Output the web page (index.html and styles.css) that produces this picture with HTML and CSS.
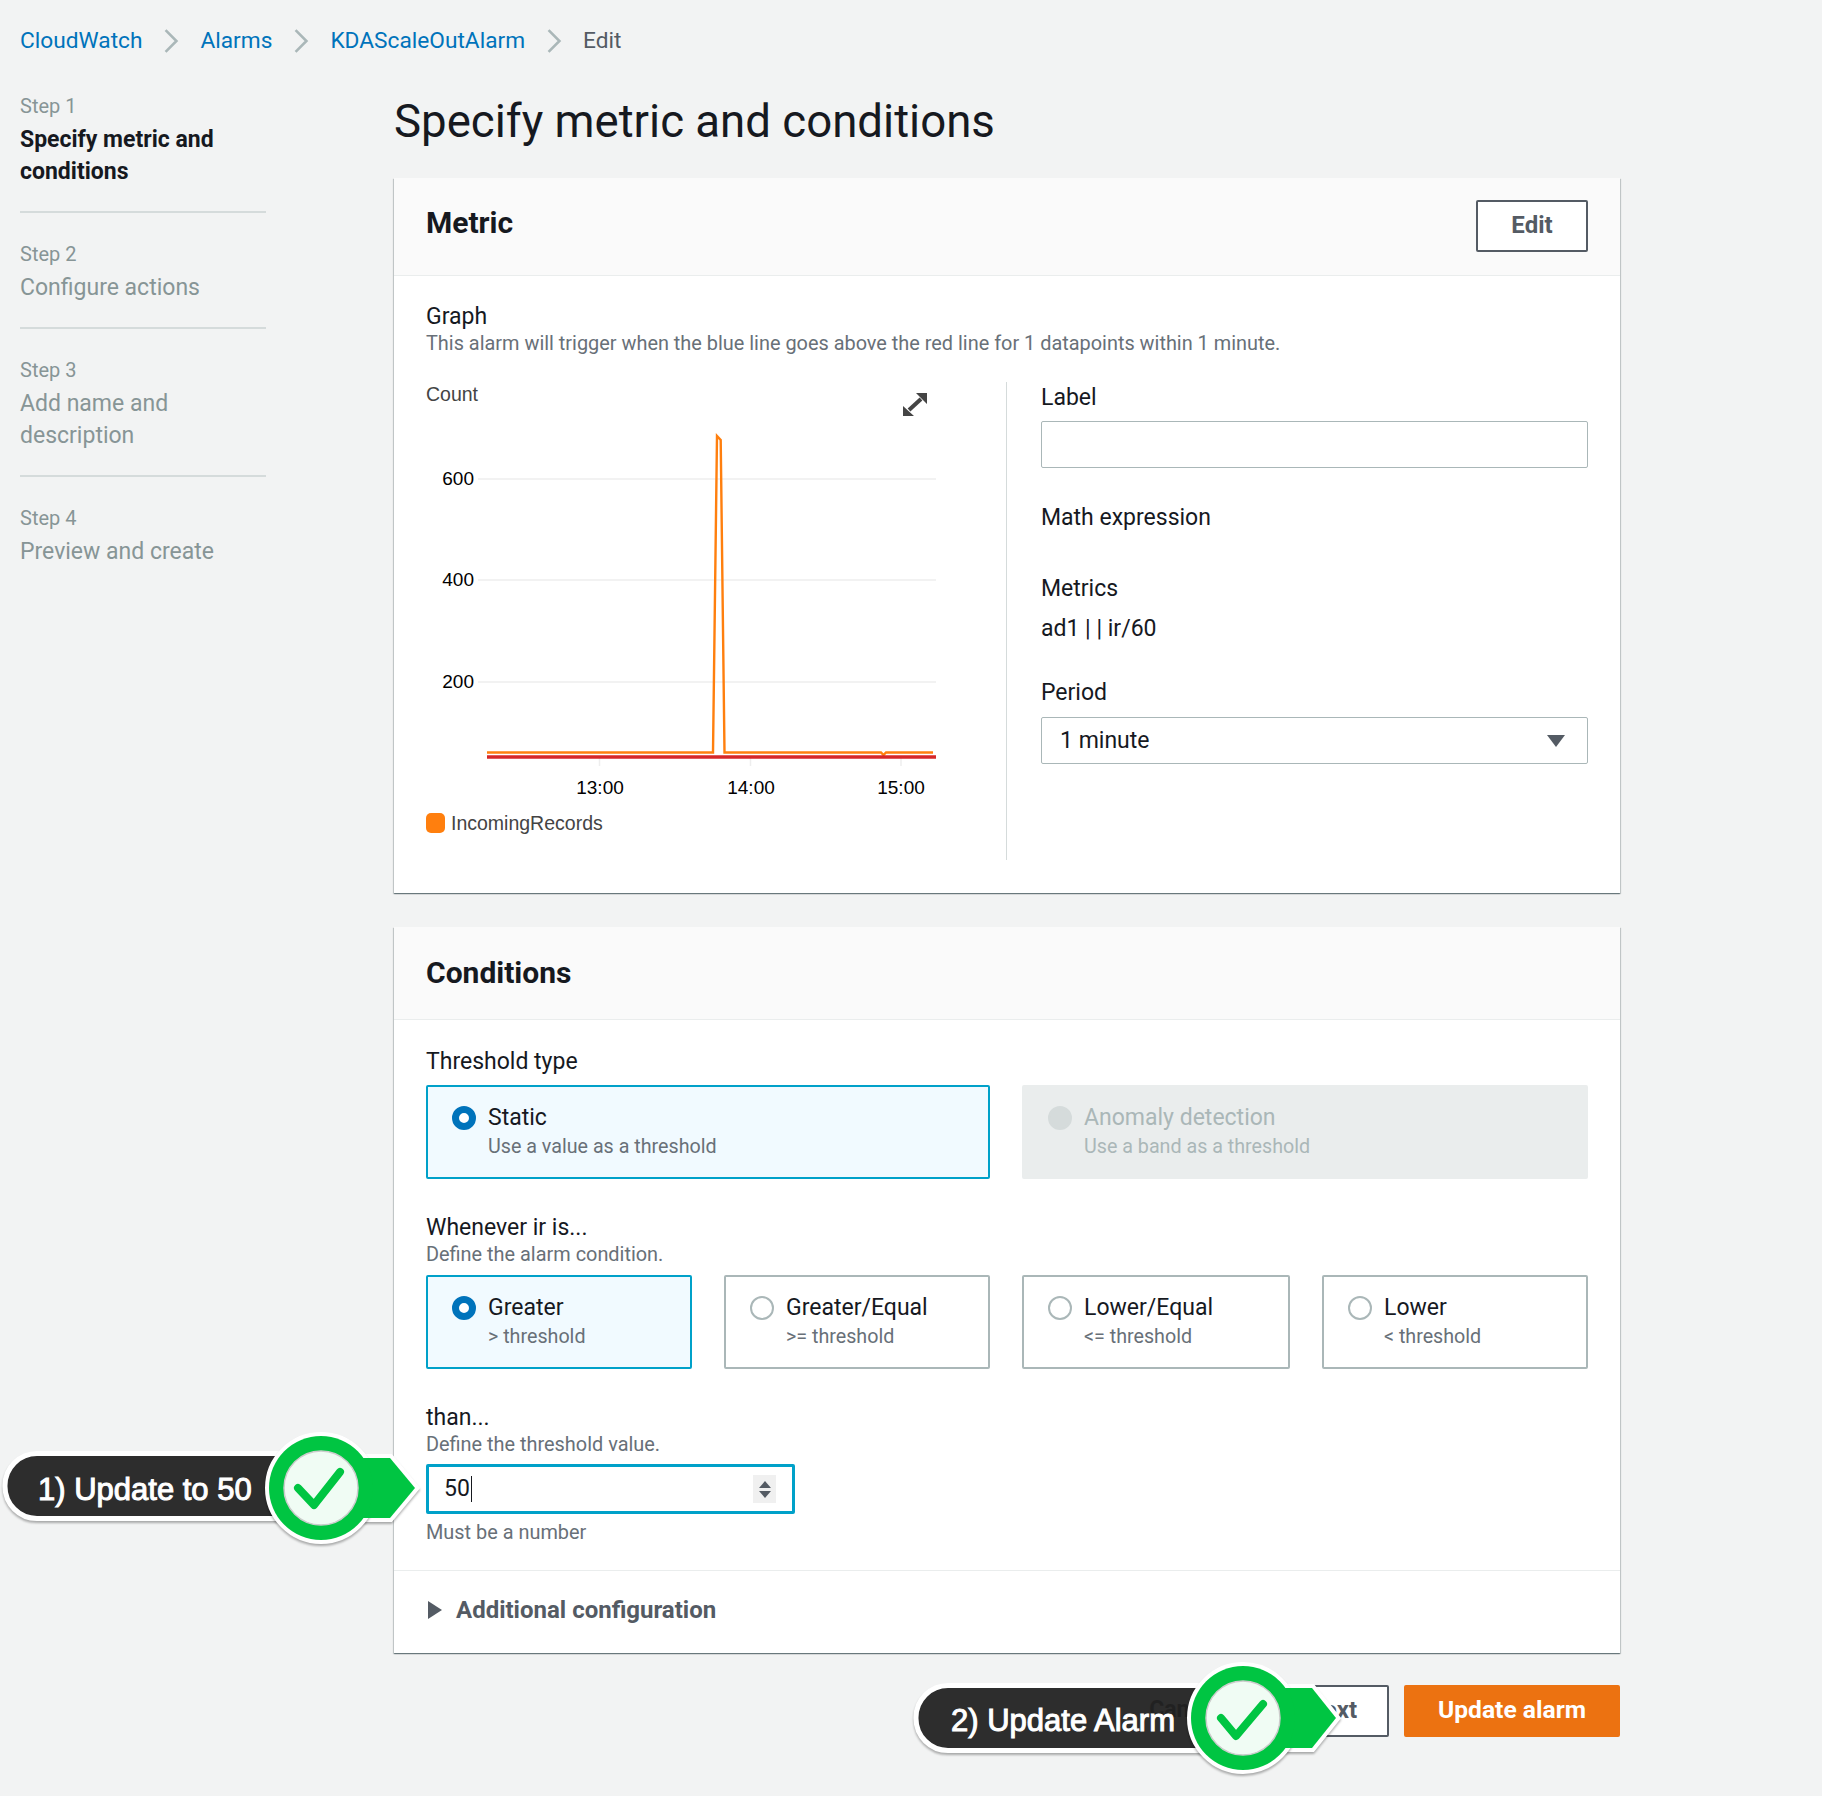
FILE: index.html
```html
<!DOCTYPE html>
<html lang="en">
<head>
    <meta charset="UTF-8">
    <title>Edit alarm</title>
    <link rel="stylesheet" href="styles.css">
</head>
<body>

<nav class="breadcrumb">
    <a href="#">CloudWatch</a>
    <svg class="crumb-sep" viewBox="0 0 14 24"><path d="M2 2l10 10L2 22"/></svg>
    <a href="#">Alarms</a>
    <svg class="crumb-sep" viewBox="0 0 14 24"><path d="M2 2l10 10L2 22"/></svg>
    <a href="#">KDAScaleOutAlarm</a>
    <svg class="crumb-sep" viewBox="0 0 14 24"><path d="M2 2l10 10L2 22"/></svg>
    <span>Edit</span>
</nav>

<div class="layout">
    <!-- Wizard steps -->
    <ul class="steps">
        <li class="step active">
            <div class="step-no">Step 1</div>
            <div class="step-name">Specify metric and conditions</div>
        </li>
        <li class="step">
            <div class="step-no">Step 2</div>
            <div class="step-name">Configure actions</div>
        </li>
        <li class="step">
            <div class="step-no">Step 3</div>
            <div class="step-name">Add name and<br>description</div>
        </li>
        <li class="step">
            <div class="step-no">Step 4</div>
            <div class="step-name">Preview and create</div>
        </li>
    </ul>

    <main class="content">
        <h1 class="page-title">Specify metric and conditions</h1>

        <!-- Metric -->
        <section class="panel">
            <header class="panel-head metric-head">
                <h2>Metric</h2>
                <button class="btn edit-btn">Edit</button>
            </header>
            <div class="panel-body metric-body">
                <div class="label">Graph</div>
                <div class="hint">This alarm will trigger when the blue line goes above the red line for 1 datapoints within 1 minute.</div>
                <div class="metric-row">
                    <div class="chart-col">
                        <svg class="chart" width="581" height="478" viewBox="426 381 581 478">
                            <text class="axis-title" x="426" y="400">Count</text>
                            <g class="grid">
                                <line x1="478" y1="478" x2="936" y2="478"/>
                                <line x1="478" y1="579" x2="936" y2="579"/>
                                <line x1="478" y1="681" x2="936" y2="681"/>
                                <line x1="599.5" y1="756" x2="599.5" y2="765"/>
                                <line x1="750.5" y1="756" x2="750.5" y2="765"/>
                                <line x1="901" y1="756" x2="901" y2="765"/>
                            </g>
                            <g class="axis-y">
                                <text x="474" y="484">600</text>
                                <text x="474" y="585">400</text>
                                <text x="474" y="687">200</text>
                            </g>
                            <g class="axis-x">
                                <text x="600" y="793">13:00</text>
                                <text x="751" y="793">14:00</text>
                                <text x="901" y="793">15:00</text>
                            </g>
                            <path class="series" d="M487 751.5H713L717 435L720.7 439L724.5 751.5H881L883.5 754L886 751.5H933"/>
                            <line class="threshold" x1="487" y1="756" x2="936" y2="756"/>
                            <g class="expand">
                                <path d="M909 409L921 398"/>
                                <path class="expand-head" d="M903 405V415H914ZM916 392H927V403Z"/>
                            </g>
                            <rect class="swatch" x="426" y="812" width="19" height="20" rx="5"/>
                            <text class="legend" x="451" y="829">IncomingRecords</text>
                        </svg>
                    </div>
                    <div class="metric-side">
                        <div class="label">Label</div>
                        <input class="text-input" type="text">
                        <div class="label math-label">Math expression</div>
                        <div class="label metrics-label">Metrics</div>
                        <div class="label metrics-value">ad1 | | ir/60</div>
                        <div class="label period-label">Period</div>
                        <div class="select">
                            <span>1 minute</span>
                            <i class="select-caret"></i>
                        </div>
                    </div>
                </div>
            </div>
        </section>

        <!-- Conditions -->
        <section class="panel conditions">
            <header class="panel-head cond-head">
                <h2>Conditions</h2>
            </header>
            <div class="panel-body cond-body">
                <div class="label">Threshold type</div>
                <div class="tiles tiles-2">
                    <div class="tile selected">
                        <i class="radio"></i>
                        <div>
                            <div class="tile-name">Static</div>
                            <div class="tile-sub">Use a value as a threshold</div>
                        </div>
                    </div>
                    <div class="tile disabled">
                        <i class="radio"></i>
                        <div>
                            <div class="tile-name">Anomaly detection</div>
                            <div class="tile-sub">Use a band as a threshold</div>
                        </div>
                    </div>
                </div>

                <div class="label field-gap">Whenever ir is...</div>
                <div class="hint">Define the alarm condition.</div>
                <div class="tiles tiles-4">
                    <div class="tile selected">
                        <i class="radio"></i>
                        <div>
                            <div class="tile-name">Greater</div>
                            <div class="tile-sub">&gt; threshold</div>
                        </div>
                    </div>
                    <div class="tile">
                        <i class="radio"></i>
                        <div>
                            <div class="tile-name">Greater/Equal</div>
                            <div class="tile-sub">&gt;= threshold</div>
                        </div>
                    </div>
                    <div class="tile">
                        <i class="radio"></i>
                        <div>
                            <div class="tile-name">Lower/Equal</div>
                            <div class="tile-sub">&lt;= threshold</div>
                        </div>
                    </div>
                    <div class="tile">
                        <i class="radio"></i>
                        <div>
                            <div class="tile-name">Lower</div>
                            <div class="tile-sub">&lt; threshold</div>
                        </div>
                    </div>
                </div>

                <div class="label field-gap">than...</div>
                <div class="hint">Define the threshold value.</div>
                <div class="number-input">
                    <span class="number-value">50</span>
                    <span class="spinner">
                        <i class="spin-up"></i>
                        <i class="spin-down"></i>
                    </span>
                </div>
                <div class="hint must">Must be a number</div>
            </div>
            <div class="additional">
                <i class="expand-caret"></i>
                <span>Additional configuration</span>
            </div>
        </section>

        <div class="actions">
            <a class="cancel" href="#">Cancel</a>
            <button class="btn">Next</button>
            <button class="btn primary">Update alarm</button>
        </div>
    </main>
</div>

<!-- Annotation callouts, on top of the page -->
<svg class="callout callout-one" width="425" height="120" viewBox="0 0 425 120">
    <rect class="pill" x="0" y="25.5" width="362" height="65" rx="32"/>
    <text class="callout-text" x="33" y="72">1) Update to 50</text>
    <path class="badge-edge" d="M316 30H385L410 60L385 90H316Z"/>
    <circle class="badge-edge" cx="316" cy="60" r="52"/>
    <path class="badge-fill" d="M316 30H385L410 60L385 90H316Z"/>
    <circle class="badge-fill" cx="316" cy="60" r="52"/>
    <circle class="badge-inner" cx="316" cy="60" r="37"/>
    <path class="tick" d="M293 60L309 77L335 44"/>
</svg>
<svg class="callout callout-two" width="436" height="120" viewBox="0 0 436 120">
    <rect class="pill" x="0" y="27.5" width="372" height="65" rx="32"/>
    <text class="callout-text" x="35" y="73">2) Update Alarm</text>
    <path class="badge-edge" d="M327 30H396L420 60L396 90H327Z"/>
    <circle class="badge-edge" cx="327" cy="60" r="52"/>
    <path class="badge-fill" d="M327 30H396L420 60L396 90H327Z"/>
    <circle class="badge-fill" cx="327" cy="60" r="52"/>
    <circle class="badge-inner" cx="327" cy="60" r="37"/>
    <path class="tick" d="M305 60L320 78L347 46"/>
</svg>

</body>
</html>
```

FILE: styles.css
```css
* {
    box-sizing: border-box;
}

body {
    position: relative;
    margin: 0;
    min-height: 1796px;
    padding: 27px 0 0 20px;
    background-color: #f2f3f3;
    color: #16191f;
    font-family: Roboto, "Noto Sans", sans-serif;
    font-size: 23px;
}

/* Breadcrumb */
.breadcrumb {
    display: flex;
    align-items: center;
    height: 28px;
    font-size: 22.7px;
    line-height: 28px;
    color: #545b64;
}

.breadcrumb a {
    color: #0073bb;
    text-decoration: none;
}

.crumb-sep {
    width: 16px;
    height: 26px;
    margin: 0 21px 0 21px;
    fill: none;
    stroke: #aab7b8;
    stroke-width: 2.4;
}

.layout {
    display: flex;
    margin-top: 37px;
}

/* Steps */
.steps {
    flex: none;
    width: 246px;
    margin: 0 128px 0 0;
    padding: 0;
    list-style: none;
    color: #879596;
}

.step {
    padding: 28px 0 23px;
    border-bottom: 2px solid #d5dbdb;
}

.step:first-child {
    padding-top: 1px;
    padding-bottom: 23px;
}

.step:last-child {
    border-bottom: none;
}

.step-no {
    margin-bottom: 5px;
    font-size: 20px;
    line-height: 26px;
}

.step-name {
    line-height: 32px;
}

.step.active .step-name {
    color: #16191f;
    font-weight: 700;
}

/* Main column */
.content {
    flex: none;
    width: 1226px;
}

.page-title {
    margin: 0 0 28px;
    padding-top: 2px;
    font-size: 45.6px;
    font-weight: 400;
    line-height: 56px;
}

.panel {
    background-color: #fff;
    box-shadow: 0 1px 1px 0 rgba(0, 28, 36, 0.4), 1px 1px 1px 0 rgba(0, 28, 36, 0.15), -1px 1px 1px 0 rgba(0, 28, 36, 0.15);
}

.conditions {
    margin-top: 34px;
}

.panel-head {
    display: flex;
    align-items: center;
    justify-content: space-between;
    padding: 0 32px;
    background-color: #fafafa;
    border-bottom: 1px solid #eaeded;
}

.panel-head h2 {
    margin: 0;
    font-size: 30px;
    font-weight: 700;
}

.metric-head {
    height: 98px;
}

.metric-head h2 {
    margin-top: -8px;
}

.cond-head {
    height: 93px;
}

.cond-head h2 {
    margin-top: -2px;
}

.panel-body {
    padding: 28px 32px 0;
}

.metric-body {
    padding-top: 27px;
    padding-bottom: 33px;
}

.label {
    line-height: 28px;
}

.hint {
    color: #687078;
    font-size: 19.9px;
    line-height: 26px;
}

.btn {
    height: 52px;
    padding: 0 32px;
    background-color: #fff;
    border: 2px solid #545b64;
    border-radius: 2px;
    color: #545b64;
    font-family: inherit;
    font-size: 24px;
    font-weight: 700;
}

.edit-btn {
    width: 112px;
    margin-top: -2px;
    padding: 0 0 2px;
}

/* Graph + side fields */
.metric-row {
    display: flex;
    margin-top: 25px;
}

.chart-col {
    flex: none;
    width: 581px;
    height: 478px;
    border-right: 1px solid #d5dbdb;
}

.chart {
    display: block;
    font-family: "Liberation Sans", Arial, sans-serif;
    font-size: 19px;
}

.axis-title,
.legend {
    fill: #444;
    font-size: 19.5px;
}

.axis-y text {
    fill: #000;
    text-anchor: end;
}

.axis-x text {
    fill: #000;
    text-anchor: middle;
}

.grid line {
    stroke: #eee;
    stroke-width: 1.5;
}

.series {
    fill: none;
    stroke: #ff7f0e;
    stroke-width: 2.4;
}

.threshold {
    stroke: #d62728;
    stroke-width: 3.5;
}

.expand path {
    stroke: #444;
    stroke-width: 4;
    fill: none;
}

.expand .expand-head {
    fill: #444;
    stroke: none;
}

.swatch {
    fill: #ff7f0e;
}

.metric-side {
    flex: 1;
    padding-left: 34px;
    padding-top: 2px;
}

.text-input {
    display: block;
    width: 100%;
    height: 47px;
    margin-top: 9px;
    border: 1px solid #aab7b8;
    border-radius: 2px;
    background-color: #fff;
}

.math-label {
    margin-top: 36px;
}

.metrics-label {
    margin-top: 43px;
}

.metrics-value {
    margin-top: 12px;
}

.period-label {
    margin-top: 36px;
}

.select {
    display: flex;
    align-items: center;
    justify-content: space-between;
    height: 47px;
    margin-top: 10px;
    padding: 0 22px 0 18px;
    border: 1px solid #aab7b8;
    border-radius: 2px;
}

.select-caret {
    width: 0;
    height: 0;
    border-left: 9px solid transparent;
    border-right: 9px solid transparent;
    border-top: 12px solid #545b64;
}

/* Radio tiles */
.tiles {
    display: grid;
    gap: 32px;
}

.tiles-2 {
    grid-template-columns: 564px 566px;
    margin-top: 9px;
}

.tiles-4 {
    grid-template-columns: 266px 266px 268px 266px;
    margin-top: 7px;
}

.tile {
    display: flex;
    height: 94px;
    padding: 16px 24px;
    background-color: #fff;
    border: 2px solid #aab7b8;
    border-radius: 2px;
}

.tile.selected {
    background-color: #f1faff;
    border-color: #00a1c9;
}

.tile.disabled {
    background-color: #eaeded;
    border-color: #eaeded;
    color: #aab7b8;
}

.radio {
    flex: none;
    width: 24px;
    height: 24px;
    margin-top: 3px;
    margin-right: 12px;
    border: 2px solid #aab7b8;
    border-radius: 50%;
    background-color: #fff;
}

.tile.selected .radio {
    border: 7px solid #0073bb;
}

.tile.disabled .radio {
    background-color: #d5dbdb;
    border-color: #d5dbdb;
}

.tile-name {
    line-height: 29px;
}

.tile-sub {
    color: #687078;
    font-size: 19.7px;
    line-height: 29px;
}

.tile.disabled .tile-sub {
    color: #aab7b8;
}

.field-gap {
    margin-top: 35px;
}

/* Threshold value */
.number-input {
    display: flex;
    align-items: center;
    justify-content: space-between;
    width: 369px;
    height: 50px;
    margin-top: 6px;
    padding: 0 16px 0 15px;
    border: 3px solid #00a1c9;
    border-radius: 2px;
}

.number-value {
    padding-right: 1px;
    border-right: 1px solid #16191f;
    line-height: 26px;
}

.spinner {
    display: flex;
    flex-direction: column;
    align-items: center;
    justify-content: center;
    gap: 3px;
    width: 23px;
    height: 28px;
    background-color: #f0f0f0;
}

.spin-up,
.spin-down {
    width: 0;
    height: 0;
    border-left: 6px solid transparent;
    border-right: 6px solid transparent;
}

.spin-up {
    border-bottom: 7px solid #545b64;
}

.spin-down {
    border-top: 7px solid #545b64;
}

.must {
    margin-top: 6px;
    padding-bottom: 24px;
}

.additional {
    display: flex;
    align-items: center;
    height: 83px;
    padding: 0 34px 5px;
    border-top: 1px solid #eaeded;
    color: #545b64;
    font-size: 24px;
    font-weight: 700;
}

.expand-caret {
    width: 0;
    height: 0;
    margin-right: 14px;
    border-top: 9px solid transparent;
    border-bottom: 9px solid transparent;
    border-left: 14px solid #545b64;
}

/* Footer buttons */
.actions {
    display: flex;
    align-items: center;
    justify-content: flex-end;
    margin-top: 32px;
}

.cancel {
    margin-right: 55px;
    margin-bottom: 3px;
    color: #16191f;
    font-weight: 700;
    text-decoration: none;
}

.actions .btn {
    width: 114px;
    padding: 0 0 3px;
}

.actions .primary {
    width: 216px;
    margin-left: 15px;
    background-color: #ec7211;
    border-color: #ec7211;
    color: #fff;
    font-size: 24.6px;
}

/* Callouts */
.callout {
    position: absolute;
    overflow: visible;
    font-family: "Liberation Sans", Arial, sans-serif;
}

.callout-one {
    left: 5px;
    top: 1428px;
}

.callout-two {
    left: 916px;
    top: 1658px;
}

.pill {
    fill: #222;
    fill-opacity: 0.93;
    stroke: #fff;
    stroke-width: 5;
    filter: drop-shadow(0 2px 1px rgba(0, 0, 0, 0.3));
}

.callout-text {
    fill: #fff;
    stroke: #fff;
    stroke-width: 1;
    font-size: 31px;
}

.badge-edge {
    fill: #fff;
    stroke: #fff;
    stroke-width: 8;
    filter: drop-shadow(0 2px 1px rgba(0, 0, 0, 0.3));
}

.badge-fill {
    fill: #00c542;
}

.badge-inner {
    fill: #fff;
    fill-opacity: 0.94;
    stroke: #ccc;
    stroke-width: 1.5;
}

.tick {
    fill: none;
    stroke: #00c542;
    stroke-width: 8;
    stroke-linecap: round;
    stroke-linejoin: round;
}
```
